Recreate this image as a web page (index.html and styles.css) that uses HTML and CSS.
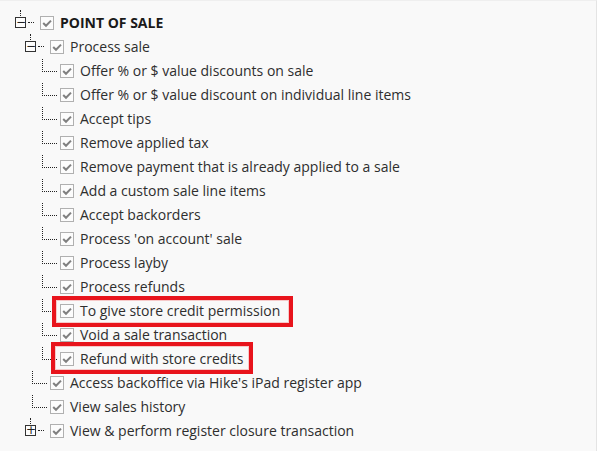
FILE: index.html
```html
<!DOCTYPE html>
<html>
<head>
<meta charset="utf-8">
<link rel="stylesheet" href="styles.css">
</head>
<body>
<div class="panel">
  <ul class="tree">
    <li class="row lvl1 exp top"><span class="gutter"><span class="stem"></span><span class="box">−</span><span class="dash"></span></span><span class="cb"></span><span class="label bold">POINT OF SALE</span></li>
    <li class="row lvl2 exp"><span class="gutter"><span class="stem"></span><span class="box">−</span><span class="dash"></span></span><span class="cb"></span><span class="label">Process sale</span></li>
    <li class="row lvl3 leaf"><span class="gutter"><span class="elbow"></span></span><span class="cb"></span><span class="label">Offer % or $ value discounts on sale</span></li>
    <li class="row lvl3 leaf"><span class="gutter"><span class="elbow"></span></span><span class="cb"></span><span class="label">Offer % or $ value discount on individual line items</span></li>
    <li class="row lvl3 leaf"><span class="gutter"><span class="elbow"></span></span><span class="cb"></span><span class="label">Accept tips</span></li>
    <li class="row lvl3 leaf"><span class="gutter"><span class="elbow"></span></span><span class="cb"></span><span class="label">Remove applied tax</span></li>
    <li class="row lvl3 leaf"><span class="gutter"><span class="elbow"></span></span><span class="cb"></span><span class="label">Remove payment that is already applied to a sale</span></li>
    <li class="row lvl3 leaf"><span class="gutter"><span class="elbow"></span></span><span class="cb"></span><span class="label">Add a custom sale line items</span></li>
    <li class="row lvl3 leaf"><span class="gutter"><span class="elbow"></span></span><span class="cb"></span><span class="label">Accept backorders</span></li>
    <li class="row lvl3 leaf"><span class="gutter"><span class="elbow"></span></span><span class="cb"></span><span class="label">Process 'on account' sale</span></li>
    <li class="row lvl3 leaf"><span class="gutter"><span class="elbow"></span></span><span class="cb"></span><span class="label">Process layby</span></li>
    <li class="row lvl3 leaf"><span class="gutter"><span class="elbow"></span></span><span class="cb"></span><span class="label">Process refunds</span></li>
    <li class="row lvl3 leaf"><span class="gutter"><span class="elbow"></span></span><span class="cb"></span><span class="label">To give store credit permission</span><span class="mark mark1"></span></li>
    <li class="row lvl3 leaf"><span class="gutter"><span class="elbow"></span></span><span class="cb"></span><span class="label">Void a sale transaction</span></li>
    <li class="row lvl3 leaf"><span class="gutter"><span class="elbow"></span></span><span class="cb"></span><span class="label">Refund with store credits</span><span class="mark mark2"></span></li>
    <li class="row lvl2 leaf"><span class="gutter"><span class="elbow"></span></span><span class="cb"></span><span class="label">Access backoffice via Hike's iPad register app</span></li>
    <li class="row lvl2 leaf"><span class="gutter"><span class="elbow"></span></span><span class="cb"></span><span class="label">View sales history</span></li>
    <li class="row lvl2 exp"><span class="gutter"><span class="stem"></span><span class="box">+</span><span class="dash"></span></span><span class="cb"></span><span class="label">View &amp; perform register closure transaction</span></li>
  </ul>
</div>
</body>
</html>
```

FILE: styles.css
```css
html, body {
  margin: 0;
  padding: 0;
  background: #ffffff;
}
body {
  width: 602px;
  height: 451px;
  overflow: hidden;
  font-family: "Open Sans", "Liberation Sans", sans-serif;
  color: #2e2e2e;
}
.panel {
  width: 597px;
  height: 451px;
  box-sizing: border-box;
  background: #f9f9f9;
  border-right: 1px solid #e4e4e4;
  border-top: 1px solid #efefef;
  padding-top: 10px;
}
.tree {
  list-style: none;
  margin: 0;
  padding: 0;
}
.row {
  position: relative;
  display: flex;
  align-items: center;
  height: 24px;
  font-size: 14px;
}
.lvl1 { padding-left: 15px; }
.lvl2 { padding-left: 25px; }
.lvl3 { padding-left: 35px; }

.gutter {
  position: relative;
  flex: none;
  width: 25px;
  height: 24px;
}
/* expander */
.exp .stem {
  position: absolute;
  left: 5px;
  top: -1px;
  height: 6px;
  border-left: 1px dotted #222;
}
.box {
  position: absolute;
  left: 0;
  top: 6px;
  width: 9px;
  height: 9px;
  border: 1px solid #333;
  font: 12px/8px "DejaVu Sans", sans-serif;
  text-align: center;
  color: #222;
  background: #fdfdfd;
}
.dash {
  position: absolute;
  left: 13px;
  top: 11px;
  width: 6px;
  border-top: 1px dotted #222;
}
/* leaf elbow */
.elbow {
  position: absolute;
  left: 7px;
  top: 0;
  width: 14px;
  height: 12px;
  border-left: 1px dotted #222;
  border-bottom: 1px dotted #222;
}
.cb {
  flex: none;
  width: 12px;
  height: 12px;
  border: 1px solid #b0b0b0;
  background: #fcfcfc url("data:image/svg+xml,%3Csvg xmlns='http://www.w3.org/2000/svg' width='12' height='12'%3E%3Cpath d='M2.2 6 L5 8.8 L10 3.6' fill='none' stroke='%23808080' stroke-width='2'/%3E%3C/svg%3E") no-repeat center;
  margin-right: 6px;
}
.label {
  white-space: nowrap;
  line-height: 24px;
}
.bold {
  font-weight: 700;
  color: #1a1a1a;
}
.mark {
  position: absolute;
  border: 4px solid #e8141c;
  box-shadow: inset 0 0 0 1px #f6c9c9;
  pointer-events: none;
}
.mark1 {
  left: 52px;
  top: -3px;
  width: 233px;
  height: 23px;
}
.mark2 {
  left: 51px;
  top: -5px;
  width: 194px;
  height: 24px;
}
```
